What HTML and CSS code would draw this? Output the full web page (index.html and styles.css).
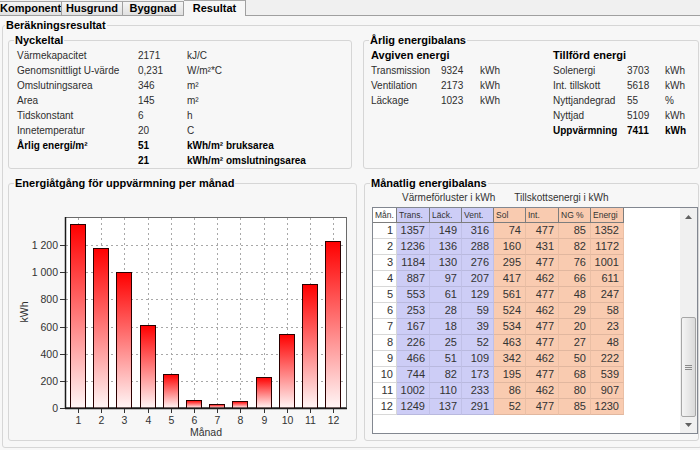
FILE: index.html
```html
<!DOCTYPE html>
<html lang="sv">
<head>
<meta charset="utf-8">
<title>Resultat</title>
<link rel="stylesheet" href="styles.css">
</head>
<body>
<nav class="tabs">
  <div class="tab tab-first">Komponent</div>
  <div class="tab">Husgrund</div>
  <div class="tab">Byggnad</div>
  <div class="tab tab-active">Resultat</div>
</nav>
<fieldset class="group outer">
  <legend>Beräkningsresultat</legend>
  <div class="row row-top">
    <fieldset class="group box-key">
      <legend>Nyckeltal</legend>
      <div class="kv">
        <span>Värmekapacitet</span><span>2171</span><span>kJ/C</span>
        <span>Genomsnittligt U-värde</span><span>0,231</span><span>W/m²*C</span>
        <span>Omslutningsarea</span><span>346</span><span>m²</span>
        <span>Area</span><span>145</span><span>m²</span>
        <span>Tidskonstant</span><span>6</span><span>h</span>
        <span>Innetemperatur</span><span>20</span><span>C</span>
        <b>Årlig energi/m²</b><b>51</b><b>kWh/m² bruksarea</b>
        <b></b><b>21</b><b>kWh/m² omslutningsarea</b>
      </div>
    </fieldset>
    <fieldset class="group box-annual">
      <legend>Årlig energibalans</legend>
      <div class="balance">
        <div class="bal bal-out">
          <b class="bal-head">Avgiven energi</b>
          <span>Transmission</span><span>9324</span><span>kWh</span>
          <span>Ventilation</span><span>2173</span><span>kWh</span>
          <span>Läckage</span><span>1023</span><span>kWh</span>
        </div>
        <div class="bal bal-in">
          <b class="bal-head">Tillförd energi</b>
          <span>Solenergi</span><span>3703</span><span>kWh</span>
          <span>Int. tillskott</span><span>5618</span><span>kWh</span>
          <span>Nyttjandegrad</span><span>55</span><span>%</span>
          <span>Nyttjad</span><span>5109</span><span>kWh</span>
          <b>Uppvärmning</b><b>7411</b><b>kWh</b>
        </div>
      </div>
    </fieldset>
  </div>
  <div class="row row-bottom">
    <fieldset class="group box-chart">
      <legend>Energiåtgång för uppvärmning per månad</legend>
      <svg class="chart" width="348" height="250" viewBox="9 190 348 250" xmlns="http://www.w3.org/2000/svg">
        <defs>
          <linearGradient id="barfill" x1="0" y1="0" x2="0" y2="1">
            <stop offset="0" stop-color="#ff0000"/>
            <stop offset="1" stop-color="#fff6f6"/>
          </linearGradient>
        </defs>
        <rect x="65.5" y="217.5" width="281" height="190" fill="#ffffff" stroke="#6a6a6a" stroke-width="1"/>
        <g stroke="#a8a8a8" stroke-width="1" stroke-dasharray="2 3">
          <line x1="66" y1="245.5" x2="346" y2="245.5"/>
          <line x1="66" y1="272.5" x2="346" y2="272.5"/>
          <line x1="66" y1="299.5" x2="346" y2="299.5"/>
          <line x1="66" y1="327.5" x2="346" y2="327.5"/>
          <line x1="66" y1="354.5" x2="346" y2="354.5"/>
          <line x1="66" y1="381.5" x2="346" y2="381.5"/>
          <line x1="78.5" y1="218" x2="78.5" y2="407"/>
          <line x1="101.5" y1="218" x2="101.5" y2="407"/>
          <line x1="124.5" y1="218" x2="124.5" y2="407"/>
          <line x1="148.5" y1="218" x2="148.5" y2="407"/>
          <line x1="171.5" y1="218" x2="171.5" y2="407"/>
          <line x1="194.5" y1="218" x2="194.5" y2="407"/>
          <line x1="217.5" y1="218" x2="217.5" y2="407"/>
          <line x1="240.5" y1="218" x2="240.5" y2="407"/>
          <line x1="264.5" y1="218" x2="264.5" y2="407"/>
          <line x1="287.5" y1="218" x2="287.5" y2="407"/>
          <line x1="310.5" y1="218" x2="310.5" y2="407"/>
          <line x1="333.5" y1="218" x2="333.5" y2="407"/>
        </g>
        <g fill="url(#barfill)" stroke="#2a0000" stroke-width="1">
          <rect x="70.5" y="224.5" width="15" height="183.5"/>
          <rect x="93.5" y="248.5" width="15" height="159.5"/>
          <rect x="116.5" y="272.5" width="15" height="135.5"/>
          <rect x="140.5" y="325.5" width="15" height="82.5"/>
          <rect x="163.5" y="374.5" width="15" height="33.5"/>
          <rect x="186.5" y="400.5" width="15" height="7.5"/>
          <rect x="209.5" y="404.5" width="15" height="3.5"/>
          <rect x="232.5" y="401.5" width="15" height="6.5"/>
          <rect x="256.5" y="377.5" width="15" height="30.5"/>
          <rect x="279.5" y="334.5" width="15" height="73.5"/>
          <rect x="302.5" y="284.5" width="15" height="123.5"/>
          <rect x="325.5" y="241.5" width="15" height="166.5"/>
        </g>
        <g stroke="#1a1a1a" stroke-width="1.5">
          <line x1="65.5" y1="217" x2="65.5" y2="409"/>
          <line x1="65" y1="408.5" x2="347" y2="408.5"/>
        </g>
        <g stroke="#333" stroke-width="1">
          <line x1="60" y1="245.5" x2="65" y2="245.5"/>
          <line x1="60" y1="272.5" x2="65" y2="272.5"/>
          <line x1="60" y1="299.5" x2="65" y2="299.5"/>
          <line x1="60" y1="327.5" x2="65" y2="327.5"/>
          <line x1="60" y1="354.5" x2="65" y2="354.5"/>
          <line x1="60" y1="381.5" x2="65" y2="381.5"/>
          <line x1="60" y1="408.5" x2="65" y2="408.5"/>
          <line x1="78.5" y1="409" x2="78.5" y2="413"/>
          <line x1="101.5" y1="409" x2="101.5" y2="413"/>
          <line x1="124.5" y1="409" x2="124.5" y2="413"/>
          <line x1="148.5" y1="409" x2="148.5" y2="413"/>
          <line x1="171.5" y1="409" x2="171.5" y2="413"/>
          <line x1="194.5" y1="409" x2="194.5" y2="413"/>
          <line x1="217.5" y1="409" x2="217.5" y2="413"/>
          <line x1="240.5" y1="409" x2="240.5" y2="413"/>
          <line x1="264.5" y1="409" x2="264.5" y2="413"/>
          <line x1="287.5" y1="409" x2="287.5" y2="413"/>
          <line x1="310.5" y1="409" x2="310.5" y2="413"/>
          <line x1="333.5" y1="409" x2="333.5" y2="413"/>
        </g>
        <g class="axis-text" text-anchor="end">
          <text x="58" y="249">1 200</text>
          <text x="58" y="276">1 000</text>
          <text x="58" y="303">800</text>
          <text x="58" y="331">600</text>
          <text x="58" y="358">400</text>
          <text x="58" y="385">200</text>
          <text x="58" y="412">0</text>
        </g>
        <g class="axis-text" text-anchor="middle">
          <text x="78.5" y="424">1</text>
          <text x="101.5" y="424">2</text>
          <text x="124.5" y="424">3</text>
          <text x="148.5" y="424">4</text>
          <text x="171.5" y="424">5</text>
          <text x="194.5" y="424">6</text>
          <text x="217.5" y="424">7</text>
          <text x="240.5" y="424">8</text>
          <text x="264.5" y="424">9</text>
          <text x="287.5" y="424">10</text>
          <text x="310.5" y="424">11</text>
          <text x="333.5" y="424">12</text>
          <text x="206" y="436">Månad</text>
          <text transform="translate(28 312) rotate(-90)">kWh</text>
        </g>
      </svg>
    </fieldset>
    <fieldset class="group box-table">
      <legend>Månatlig energibalans</legend>
      <div class="captions"><span>Värmeförluster i kWh</span><span class="cap-gain">Tillskottsenergi i kWh</span></div>
      <div class="gridview">
        <div class="gv-body">
          <table class="gv-table">
            <colgroup>
              <col class="w24"><col class="w33"><col class="w32"><col class="w32"><col class="w32"><col class="w33"><col class="w32"><col class="w33">
            </colgroup>
            <thead>
              <tr><th class="c-m">Mån.</th><th class="c-loss">Trans.</th><th class="c-loss">Läck.</th><th class="c-loss">Vent.</th><th class="c-gain">Sol</th><th class="c-gain">Int.</th><th class="c-gain">NG %</th><th class="c-gain">Energi</th></tr>
            </thead>
            <tbody>
              <tr><td class="c-m">1</td><td class="c-loss">1357</td><td class="c-loss">149</td><td class="c-loss">316</td><td class="c-gain">74</td><td class="c-gain">477</td><td class="c-gain">85</td><td class="c-gain">1352</td></tr>
              <tr><td class="c-m">2</td><td class="c-loss">1236</td><td class="c-loss">136</td><td class="c-loss">288</td><td class="c-gain">160</td><td class="c-gain">431</td><td class="c-gain">82</td><td class="c-gain">1172</td></tr>
              <tr><td class="c-m">3</td><td class="c-loss">1184</td><td class="c-loss">130</td><td class="c-loss">276</td><td class="c-gain">295</td><td class="c-gain">477</td><td class="c-gain">76</td><td class="c-gain">1001</td></tr>
              <tr><td class="c-m">4</td><td class="c-loss">887</td><td class="c-loss">97</td><td class="c-loss">207</td><td class="c-gain">417</td><td class="c-gain">462</td><td class="c-gain">66</td><td class="c-gain">611</td></tr>
              <tr><td class="c-m">5</td><td class="c-loss">553</td><td class="c-loss">61</td><td class="c-loss">129</td><td class="c-gain">561</td><td class="c-gain">477</td><td class="c-gain">48</td><td class="c-gain">247</td></tr>
              <tr><td class="c-m">6</td><td class="c-loss">253</td><td class="c-loss">28</td><td class="c-loss">59</td><td class="c-gain">524</td><td class="c-gain">462</td><td class="c-gain">29</td><td class="c-gain">58</td></tr>
              <tr><td class="c-m">7</td><td class="c-loss">167</td><td class="c-loss">18</td><td class="c-loss">39</td><td class="c-gain">534</td><td class="c-gain">477</td><td class="c-gain">20</td><td class="c-gain">23</td></tr>
              <tr><td class="c-m">8</td><td class="c-loss">226</td><td class="c-loss">25</td><td class="c-loss">52</td><td class="c-gain">463</td><td class="c-gain">477</td><td class="c-gain">27</td><td class="c-gain">48</td></tr>
              <tr><td class="c-m">9</td><td class="c-loss">466</td><td class="c-loss">51</td><td class="c-loss">109</td><td class="c-gain">342</td><td class="c-gain">462</td><td class="c-gain">50</td><td class="c-gain">222</td></tr>
              <tr><td class="c-m">10</td><td class="c-loss">744</td><td class="c-loss">82</td><td class="c-loss">173</td><td class="c-gain">195</td><td class="c-gain">477</td><td class="c-gain">68</td><td class="c-gain">539</td></tr>
              <tr><td class="c-m">11</td><td class="c-loss">1002</td><td class="c-loss">110</td><td class="c-loss">233</td><td class="c-gain">86</td><td class="c-gain">462</td><td class="c-gain">80</td><td class="c-gain">907</td></tr>
              <tr><td class="c-m">12</td><td class="c-loss">1249</td><td class="c-loss">137</td><td class="c-loss">291</td><td class="c-gain">52</td><td class="c-gain">477</td><td class="c-gain">85</td><td class="c-gain">1230</td></tr>
            </tbody>
          </table>
        </div>
        <div class="vscroll">
          <div class="sb-btn"><svg width="7" height="4" viewBox="0 0 7 4"><polygon points="0,4 3.5,0 7,4" fill="#606060"/></svg></div>
          <div class="sb-track">
            <div class="sb-thumb"><svg width="7" height="5" viewBox="0 0 7 5"><g stroke="#8a8a8a" stroke-width="1"><line x1="0" y1="0.5" x2="7" y2="0.5"/><line x1="0" y1="2.5" x2="7" y2="2.5"/><line x1="0" y1="4.5" x2="7" y2="4.5"/></g></svg></div>
          </div>
          <div class="sb-btn sb-down"><svg width="7" height="4" viewBox="0 0 7 4"><polygon points="0,0 7,0 3.5,4" fill="#606060"/></svg></div>
        </div>
      </div>
    </fieldset>
  </div>
</fieldset>
</body>
</html>
```

FILE: styles.css
```css
html, body {
  margin: 0;
  padding: 0;
  width: 700px;
  height: 450px;
  overflow: hidden;
}

body {
  background: #f7f7f7;
  font-family: "Liberation Sans", Arial, sans-serif;
  font-size: 10px;
  color: #2e2e2e;
}

/* ---------- tabs ---------- */
.tabs {
  display: flex;
  align-items: flex-end;
  height: 15px;
  border-bottom: 1px solid #a0a0a0;
  background: #f0f0f0;
}

.tab {
  box-sizing: border-box;
  width: 61px;
  height: 14px;
  border-top: 1px solid #a7a7a7;
  border-right: 1px solid #a0a0a0;
  background: linear-gradient(#f5f5f5, #e1e1e1);
  font-size: 11px;
  font-weight: bold;
  line-height: 13px;
  color: #000;
  text-align: center;
  white-space: nowrap;
  overflow: hidden;
}

.tab-first {
  width: 62px;
  text-align: left;
}

.tab-active {
  width: 62px;
  height: 16px;
  margin-bottom: -1px;
  background: #f7f7f7;
  line-height: 14px;
}

/* ---------- group boxes ---------- */
.group {
  box-sizing: border-box;
  margin: 0;
  padding: 0;
  min-width: 0;
  border: 1px solid #d6d6d6;
  border-radius: 3px;
}

.group > legend {
  margin-left: 5px;
  padding: 0 1px;
  font-size: 11px;
  font-weight: bold;
  line-height: 14px;
  color: #000;
}

.outer {
  width: 700px;
  margin: 2px 0 0 2px;
  padding: 0 0 6px 0;
}

.outer > legend {
  margin-left: 2px;
}

.row {
  display: flex;
  margin: 0 2px 0 5px;
}

.row-top {
  margin-top: 1px;
  gap: 11px;
}

.row-bottom {
  margin-top: 7px;
  gap: 7px;
}

.box-key {
  width: 344px;
  flex: none;
}

.box-annual {
  flex: 1;
}

.box-chart {
  width: 349px;
  flex: none;
}

.box-table {
  flex: 1;
}

/* ---------- key values ---------- */
.kv {
  display: grid;
  grid-template-columns: 121px 49px auto;
  grid-auto-rows: 15px;
  line-height: 15px;
  padding: 1px 0 0 8px;
  white-space: nowrap;
}

.kv b, .bal b {
  color: #000;
}

.balance {
  display: flex;
  padding: 1px 0 0 7px;
}

.bal {
  display: grid;
  grid-auto-rows: 15px;
  line-height: 15px;
  white-space: nowrap;
}

.bal-out {
  width: 182px;
  grid-template-columns: 70px 39px 73px;
}

.bal-in {
  grid-template-columns: 74px 38px auto;
}

.bal-head {
  grid-column: 1 / -1;
  font-size: 11px;
}

/* ---------- chart ---------- */
.chart {
  display: block;
}

.axis-text {
  font-family: "Liberation Sans", Arial, sans-serif;
  font-size: 10.5px;
  fill: #333;
}

/* ---------- monthly table ---------- */
.captions {
  height: 16px;
  line-height: 16px;
  padding-left: 37px;
  white-space: nowrap;
  color: #333;
}

.cap-gain {
  margin-left: 19px;
}

.gridview {
  box-sizing: border-box;
  display: flex;
  width: 326px;
  height: 227px;
  margin: 1px 0 0 7px;
  border: 1px solid #828790;
  background: #ffffff;
}

.gv-body {
  flex: 1;
  overflow: hidden;
}

.gv-table {
  table-layout: fixed;
  width: 251px;
  border-collapse: separate;
  border-spacing: 0;
  font-family: "Liberation Sans Narrow", "Liberation Sans", Arial, sans-serif;
  color: #333;
}

.w24 { width: 24px; }
.w32 { width: 32px; }
.w33 { width: 33px; }

.gv-table th {
  padding: 0 0 0 2px;
  font-size: 8.5px;
  font-weight: normal;
  line-height: 14px;
  text-align: left;
  white-space: nowrap;
  overflow: hidden;
  border-right: 1px solid #7d7d7d;
  border-bottom: 1px solid #7d7d7d;
}

.gv-table td {
  padding: 0 4px 0 0;
  font-size: 11px;
  line-height: 15px;
  text-align: right;
  white-space: nowrap;
  border-right: 1px solid rgba(0, 0, 0, 0.06);
  border-bottom: 1px solid rgba(0, 0, 0, 0.09);
}

.gv-table td.c-m {
  padding-right: 3px;
  background: #ffffff;
  border-right: 1px solid #d8d8d8;
  border-bottom: 1px solid #d8d8d8;
}

.gv-table th.c-m {
  background: #ffffff;
}

.c-loss {
  background: #cdcdf6;
}

.c-gain {
  background: #f9cbb0;
}

/* ---------- scrollbar ---------- */
.vscroll {
  display: flex;
  flex-direction: column;
  width: 17px;
  flex: none;
  background: #f0f0f0;
}

.sb-btn {
  display: flex;
  align-items: center;
  justify-content: center;
  height: 17px;
  flex: none;
}

.sb-down {
  height: 16px;
}

.sb-track {
  display: flex;
  flex-direction: column;
  justify-content: flex-end;
  flex: 1;
}

.sb-thumb {
  box-sizing: border-box;
  display: flex;
  align-items: center;
  justify-content: center;
  height: 100px;
  margin: 0 1px;
  border: 1px solid #a6a6a6;
  border-radius: 2px;
  background: linear-gradient(to right, #f4f4f4, #dadada);
}
```
